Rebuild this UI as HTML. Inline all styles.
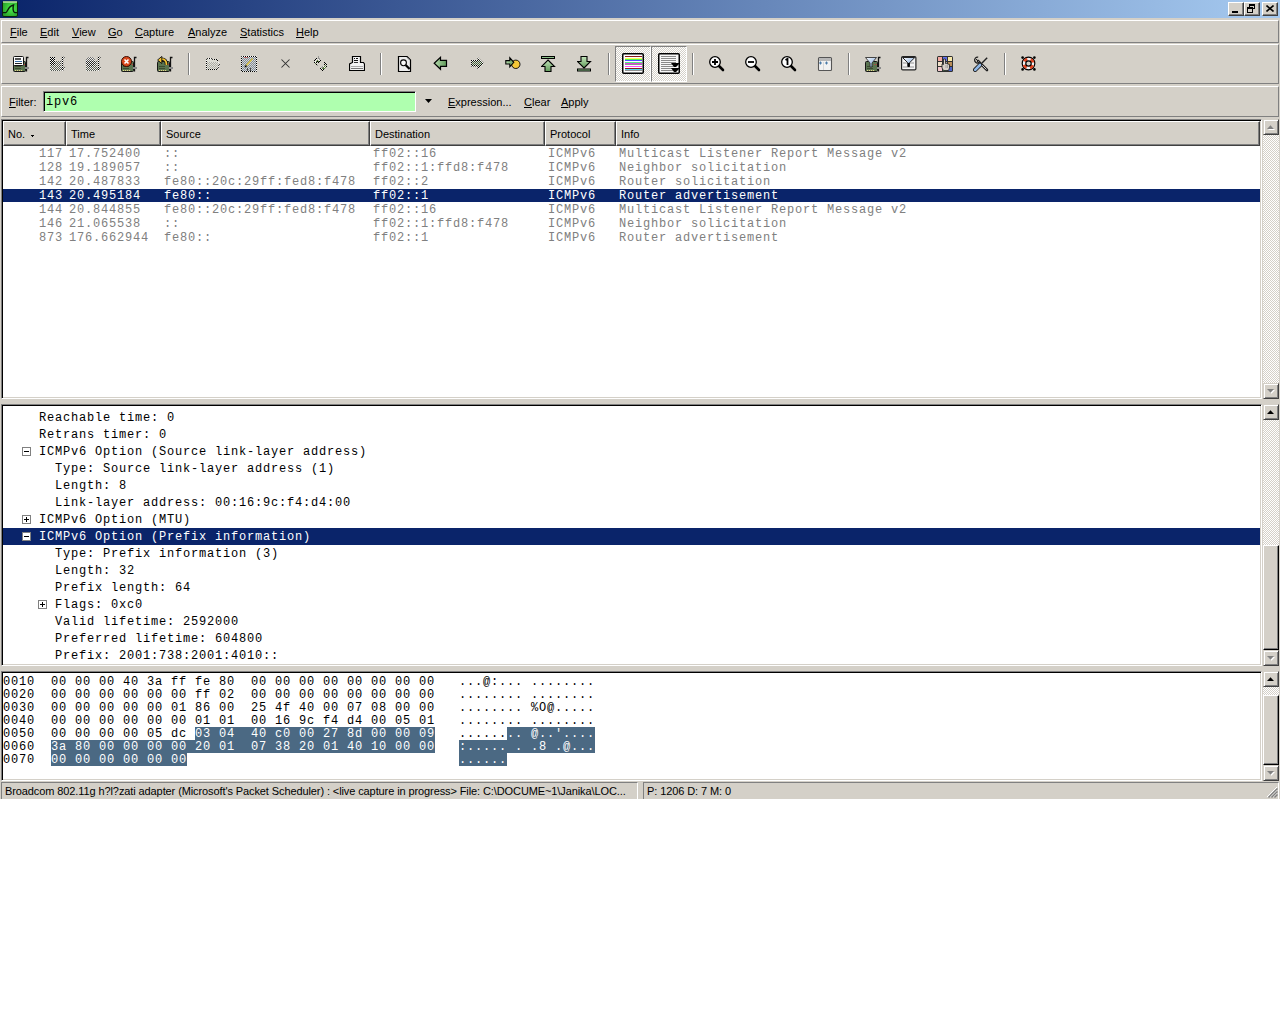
<!DOCTYPE html><html><head><meta charset="utf-8"><style>
*{margin:0;padding:0;box-sizing:border-box}
html,body{width:1280px;height:1024px;overflow:hidden;background:#fff}
body{position:relative;font-family:"Liberation Sans",sans-serif;font-size:11px;color:#000}
.ab{position:absolute}
.win{position:absolute;left:0;top:18px;width:1280px;height:781px;background:#d4d0c8}
.title{position:absolute;left:0;top:0;width:1280px;height:18px;background:linear-gradient(to right,#0a246a,#a6caf0)}
.raised{position:absolute;border-top:1px solid #fff;border-left:1px solid #fff;border-right:1px solid #808080;border-bottom:1px solid #808080;background:#d4d0c8}
.sunk{position:absolute;border-top:1px solid #808080;border-left:1px solid #808080;border-right:1px solid #fff;border-bottom:1px solid #fff;background:#fff;box-shadow:inset 1px 1px 0 #000,inset -1px -1px 0 #d4d0c8;overflow:hidden}
.btn{position:absolute;background:#d4d0c8;border-top:1px solid #d4d0c8;border-left:1px solid #d4d0c8;border-right:1px solid #404040;border-bottom:1px solid #404040;box-shadow:inset 1px 1px 0 #fff,inset -1px -1px 0 #808080}
.cbtn{position:absolute;background:#d4d0c8;border-top:1px solid #fff;border-left:1px solid #fff;border-right:1px solid #404040;border-bottom:1px solid #404040;box-shadow:inset -1px -1px 0 #808080}
.chk{background:conic-gradient(#fff 25%,#d4d0c8 0 50%,#fff 0 75%,#d4d0c8 0) 0 0/2px 2px}
.mono{font-family:"Liberation Mono",monospace;font-size:12px;letter-spacing:0.8px;white-space:pre}
.t{position:absolute;white-space:pre}
u{text-decoration:underline;text-underline-offset:1px;text-decoration-thickness:1px}
.hdr{position:absolute;top:0;height:25px;background:#d4d0c8;border-top:1px solid #fff;border-left:1px solid #fff;border-right:1px solid #404040;border-bottom:1px solid #404040;box-shadow:inset -1px -1px 0 #808080;line-height:24px;padding-left:4px}
.sep{position:absolute;width:2px;border-left:1px solid #808080;border-right:1px solid #fff}
</style></head><body>
<div class="title"></div>
<svg class="ab" style="left:2px;top:1px" width="16" height="16" viewBox="0 0 16 16"><defs><radialGradient id="gi" cx="0.6" cy="0.45" r="0.65"><stop offset="0" stop-color="#4cf04c"/><stop offset="1" stop-color="#28a028"/></radialGradient></defs><rect x="0.5" y="0.5" width="15" height="15" rx="1.5" fill="url(#gi)" stroke="#0c240c" stroke-width="1"/><rect x="1" y="0" width="14" height="2" fill="#b0e0a0" opacity="0.8"/><path d="M0.5 11.6H3.8C5.5 11.6 6 5 11.5 4C10.8 6.5 10.8 11.2 12.8 11.6H15.5" fill="none" stroke="#0a200a" stroke-width="1.4"/></svg>
<div class="cbtn" style="left:1228px;top:2px;width:16px;height:14px"></div>
<div class="cbtn" style="left:1244px;top:2px;width:16px;height:14px"></div>
<div class="cbtn" style="left:1262px;top:2px;width:16px;height:14px"></div>
<div class="ab" style="left:1232px;top:11px;width:6px;height:2px;background:#000"></div>
<div class="ab" style="left:1249px;top:4px;width:6px;height:5px;border:1px solid #000;border-top-width:2px"></div>
<div class="ab" style="left:1247px;top:7px;width:6px;height:6px;border:1px solid #000;border-top-width:2px;background:#d4d0c8"></div>
<svg class="ab" style="left:1266px;top:5px" width="8" height="7" viewBox="0 0 8 7"><path d="M0.5 0.5L7.5 6.5M7.5 0.5L0.5 6.5" stroke="#000" stroke-width="1.6"/></svg>
<div class="win">
<div class="raised" style="left:1px;top:2px;width:1278px;height:23px"></div>
<div class="t" style="left:10px;top:8px;line-height:13px"><u>F</u>ile</div>
<div class="t" style="left:40px;top:8px;line-height:13px"><u>E</u>dit</div>
<div class="t" style="left:72px;top:8px;line-height:13px"><u>V</u>iew</div>
<div class="t" style="left:108px;top:8px;line-height:13px"><u>G</u>o</div>
<div class="t" style="left:135px;top:8px;line-height:13px"><u>C</u>apture</div>
<div class="t" style="left:188px;top:8px;line-height:13px"><u>A</u>nalyze</div>
<div class="t" style="left:240px;top:8px;line-height:13px"><u>S</u>tatistics</div>
<div class="t" style="left:296px;top:8px;line-height:13px"><u>H</u>elp</div>
<div class="raised" style="left:1px;top:26px;width:1278px;height:40px"></div>
<div class="raised" style="left:1px;top:68px;width:1278px;height:31px"></div>
<svg width="0" height="0" style="position:absolute"><defs><pattern id="dith" width="2" height="2" patternUnits="userSpaceOnUse"><rect width="1" height="1" fill="#000"/><rect x="1" y="1" width="1" height="1" fill="#000"/><rect x="1" y="0" width="1" height="1" fill="#fff"/><rect x="0" y="1" width="1" height="1" fill="#e8e8e0"/></pattern><linearGradient id="garr" x1="0" y1="0" x2="1" y2="0"><stop offset="0" stop-color="#b8dcb0"/><stop offset="1" stop-color="#5f9a58"/></linearGradient><linearGradient id="garrv" x1="0" y1="0" x2="0" y2="1"><stop offset="0" stop-color="#c4e4bc"/><stop offset="1" stop-color="#5f9a58"/></linearGradient><linearGradient id="funl" x1="0" y1="0" x2="1" y2="1"><stop offset="0" stop-color="#ffffff"/><stop offset="1" stop-color="#6a9ad8"/></linearGradient></defs></svg>
<svg class="ab" style="left:13px;top:38px" width="16" height="16" viewBox="0 0 16 16"><path d="M13.5 15.5V1.5H15.5" stroke="#111" stroke-width="1.3" fill="none"/><rect x="0.5" y="5.5" width="12" height="10" rx="1" fill="#5a7450" stroke="#161616"/><rect x="2" y="10" width="6" height="1" fill="#3c4a30"/><rect x="2" y="12" width="6" height="1" fill="#3c4a30"/><path d="M2 14.5H10" stroke="#e0d48a" stroke-width="1" stroke-dasharray="1.2 0.8"/><rect x="12" y="11" width="4" height="2" fill="#8c8c8c"/><rect x="9" y="8" width="1" height="1" fill="#c04040"/><rect x="11" y="8" width="1" height="1" fill="#c04040"/><rect x="0.5" y="0.5" width="10" height="9" rx="1" fill="#fff" stroke="#111"/><rect x="2" y="2" width="6" height="2" fill="#555"/><rect x="2" y="5" width="7" height="1" fill="#3a6ea5"/><rect x="2" y="7" width="7" height="1" fill="#222"/></svg>
<svg class="ab" style="left:49px;top:38px" width="16" height="16" viewBox="0 0 16 16"><path d="M1 5H12V15H1Z M12 11H16V13H12Z M1 1H6V6H1Z" fill="#d8dcd0"/><path d="M1 5H12V15H1Z M12 11H16V13H12Z" fill="url(#dith)" opacity="0.6"/><path d="M13.5 15V1.5H15.5" stroke="url(#dith)" stroke-width="1.5" fill="none"/><path d="M1 1H6V9H1Z" fill="url(#dith)"/></svg>
<svg class="ab" style="left:85px;top:38px" width="16" height="16" viewBox="0 0 16 16"><path d="M1 5H12V15H1Z M12 11H16V13H12Z" fill="#d8dcd0"/><circle cx="5.5" cy="6" r="5" fill="#e8e8e8"/><path d="M1 5H12V15H1Z M12 11H16V13H12Z" fill="url(#dith)" opacity="0.6"/><path d="M13.5 15V1.5H15.5" stroke="url(#dith)" stroke-width="1.5" fill="none"/><circle cx="5.5" cy="6" r="5" fill="url(#dith)" opacity="0.6"/></svg>
<svg class="ab" style="left:121px;top:38px" width="16" height="16" viewBox="0 0 16 16"><path d="M13.5 15.5V1.5H15.5" stroke="#111" stroke-width="1.3" fill="none"/><rect x="0.5" y="5.5" width="12" height="10" rx="1" fill="#5a7450" stroke="#161616"/><rect x="2" y="10" width="6" height="1" fill="#3c4a30"/><rect x="2" y="12" width="6" height="1" fill="#3c4a30"/><path d="M2 14.5H10" stroke="#e0d48a" stroke-width="1" stroke-dasharray="1.2 0.8"/><rect x="12" y="11" width="4" height="2" fill="#8c8c8c"/><rect x="9" y="8" width="1" height="1" fill="#c04040"/><rect x="11" y="8" width="1" height="1" fill="#c04040"/><circle cx="5.5" cy="5.5" r="5" fill="#d8481c" stroke="#3a0c00" stroke-width="1"/><path d="M3.5 3.5L7.5 7.5M7.5 3.5L3.5 7.5" stroke="#fff" stroke-width="1.6"/></svg>
<svg class="ab" style="left:157px;top:38px" width="16" height="16" viewBox="0 0 16 16"><path d="M13.5 15.5V1.5H15.5" stroke="#111" stroke-width="1.3" fill="none"/><rect x="0.5" y="5.5" width="12" height="10" rx="1" fill="#5a7450" stroke="#161616"/><rect x="2" y="10" width="6" height="1" fill="#3c4a30"/><rect x="2" y="12" width="6" height="1" fill="#3c4a30"/><path d="M2 14.5H10" stroke="#e0d48a" stroke-width="1" stroke-dasharray="1.2 0.8"/><rect x="12" y="11" width="4" height="2" fill="#8c8c8c"/><rect x="9" y="8" width="1" height="1" fill="#c04040"/><rect x="11" y="8" width="1" height="1" fill="#c04040"/><path d="M4.5 3.2C7.5 3 9.5 4.5 9.5 9" stroke="#111" stroke-width="3.4" fill="none"/><path d="M4.5 3.2C7.5 3 9.5 4.5 9.5 9" stroke="#f0c030" stroke-width="1.8" fill="none"/><path d="M0.6 4L4.8 0.4V7.6Z" fill="#f0c030" stroke="#111" stroke-width="0.9"/></svg>
<div class="ab" style="left:188px;top:35px;width:2px;height:22px;border-left:1px solid #808080;border-right:1px solid #fff"></div>
<svg class="ab" style="left:205px;top:38px" width="16" height="16" viewBox="0 0 16 16"><path d="M1.5 13.5V3.5L2.5 2.5H6.5L7.5 3.5H12.5V5.5L14.5 7.5L12.5 13.5Z" fill="#dcdcd4" stroke="url(#dith)" stroke-width="1"/><path d="M2 6H14L12 13H2Z" fill="url(#dith)" opacity="0.22"/></svg>
<svg class="ab" style="left:241px;top:38px" width="16" height="16" viewBox="0 0 16 16"><path d="M0.5 0.5H15.5V15.5H0.5Z" fill="#c0c8d0" stroke="url(#dith)" stroke-width="1"/><path d="M1 1H15V15H1Z" fill="url(#dith)" opacity="0.3"/><path d="M5 10L11.5 2.5" stroke="#d8c040" stroke-width="1.4"/><path d="M4 11L5.5 9.5" stroke="#000" stroke-width="1.5"/><rect x="3" y="1" width="4" height="1" fill="#c04040" opacity="0.6"/><rect x="6" y="12" width="1" height="3" fill="#444"/><rect x="9" y="12" width="1" height="3" fill="#444"/></svg>
<svg class="ab" style="left:277px;top:38px" width="16" height="16" viewBox="0 0 16 16"><path d="M4.5 3.5L12.5 11.5M12.5 3.5L4.5 11.5" stroke="#303030" stroke-width="1.05"/></svg>
<svg class="ab" style="left:313px;top:38px" width="16" height="16" viewBox="0 0 16 16"><rect x="5" y="0" width="1" height="1" fill="#9a9a98"/><rect x="5" y="1" width="1" height="1" fill="#9a9a98"/><rect x="5" y="2" width="1" height="1" fill="#9a9a98"/><rect x="6" y="2" width="1" height="1" fill="#9a9a98"/><rect x="6" y="3" width="1" height="1" fill="#9a9a98"/><rect x="4" y="9" width="1" height="1" fill="#9a9a98"/><rect x="9" y="10" width="1" height="1" fill="#9a9a98"/><rect x="9" y="11" width="1" height="1" fill="#9a9a98"/><rect x="8" y="11" width="1" height="1" fill="#9a9a98"/><rect x="3" y="3" width="1" height="1" fill="#f4f4f0"/><rect x="5" y="3" width="1" height="1" fill="#f4f4f0"/><rect x="2" y="5" width="1" height="1" fill="#f4f4f0"/><rect x="4" y="4" width="1" height="1" fill="#f4f4f0"/><rect x="6" y="4" width="1" height="1" fill="#f4f4f0"/><rect x="2" y="6" width="1" height="1" fill="#f4f4f0"/><rect x="12" y="8" width="1" height="1" fill="#f4f4f0"/><rect x="12" y="10" width="1" height="1" fill="#f4f4f0"/><rect x="11" y="11" width="1" height="1" fill="#f4f4f0"/><rect x="8" y="12" width="1" height="1" fill="#f4f4f0"/><rect x="9" y="13" width="1" height="1" fill="#f4f4f0"/><rect x="10" y="10" width="1" height="1" fill="#f4f4f0"/><rect x="4" y="4" width="1" height="1" fill="#5a7a40"/><rect x="3" y="5" width="1" height="1" fill="#5a7a40"/><rect x="5" y="5" width="1" height="1" fill="#5a7a40"/><rect x="2" y="7" width="1" height="1" fill="#5a7a40"/><rect x="12" y="9" width="1" height="1" fill="#5a7a40"/><rect x="11" y="10" width="1" height="1" fill="#5a7a40"/><rect x="10" y="11" width="1" height="1" fill="#5a7a40"/><rect x="9" y="12" width="1" height="1" fill="#5a7a40"/><rect x="10" y="12" width="1" height="1" fill="#5a7a40"/><rect x="11" y="12" width="1" height="1" fill="#5a7a40"/><rect x="12" y="11" width="1" height="1" fill="#5a7a40"/><rect x="3" y="2" width="1" height="1" fill="#000"/><rect x="2" y="3" width="1" height="1" fill="#000"/><rect x="1" y="4" width="1" height="1" fill="#000"/><rect x="7" y="4" width="1" height="1" fill="#000"/><rect x="4" y="5" width="1" height="1" fill="#000"/><rect x="6" y="5" width="1" height="1" fill="#000"/><rect x="1" y="6" width="1" height="1" fill="#000"/><rect x="3" y="6" width="1" height="1" fill="#000"/><rect x="5" y="6" width="1" height="1" fill="#000"/><rect x="3" y="8" width="1" height="1" fill="#000"/><rect x="11" y="6" width="1" height="1" fill="#000"/><rect x="12" y="7" width="1" height="1" fill="#000"/><rect x="11" y="8" width="1" height="1" fill="#000"/><rect x="13" y="8" width="1" height="1" fill="#000"/><rect x="13" y="10" width="1" height="1" fill="#000"/><rect x="7" y="12" width="1" height="1" fill="#000"/><rect x="8" y="13" width="1" height="1" fill="#000"/><rect x="10" y="13" width="1" height="1" fill="#000"/><rect x="9" y="14" width="1" height="1" fill="#000"/></svg>
<svg class="ab" style="left:349px;top:38px" width="16" height="16" viewBox="0 0 16 16"><path d="M3.5 0.5H11.5V6.5H14.5L15.5 8V14.5H0.5V8L3.5 6.5Z" fill="#f4f4f4" stroke="#000" stroke-width="1.2"/><rect x="5" y="2" width="1" height="1" fill="#111"/><rect x="7" y="2" width="2" height="1" fill="#111"/><rect x="5" y="4" width="4" height="1" fill="#111"/><rect x="5" y="6" width="4" height="1" fill="#333"/><rect x="2" y="10" width="12" height="1" fill="#aaa"/><rect x="2" y="12" width="12" height="1" fill="#777"/></svg>
<div class="ab" style="left:380px;top:35px;width:2px;height:22px;border-left:1px solid #808080;border-right:1px solid #fff"></div>
<svg class="ab" style="left:397px;top:38px" width="16" height="16" viewBox="0 0 16 16"><path d="M1.5 0.5H10L13.5 4V15.5H1.5Z" fill="#ececec" stroke="#000" stroke-width="1.2"/><path d="M10 1.5L12.5 4" stroke="#aaa" stroke-width="1"/><circle cx="6.5" cy="6.8" r="2.9" fill="#fafafa" stroke="#000" stroke-width="1.1"/><path d="M8.6 9L12.6 13" stroke="#000" stroke-width="2.3"/></svg>
<svg class="ab" style="left:433px;top:38px" width="16" height="16" viewBox="0 0 16 16"><path d="M1.2 7.2L7.5 1.3V4.3H13.5V10.3H7.5V13.3Z" fill="url(#garr)" stroke="#000" stroke-width="1.2"/></svg>
<svg class="ab" style="left:469px;top:38px" width="16" height="16" viewBox="0 0 16 16"><path d="M15 7.2L8.5 1V4H2V10.5H8.5V13.5Z" fill="url(#dith)"/><path d="M13.5 7.2L9.5 3.5V5.5H3V9H9.5V11Z" fill="#a0c090" opacity="0.45"/></svg>
<svg class="ab" style="left:505px;top:38px" width="16" height="16" viewBox="0 0 16 16"><circle cx="10.8" cy="8.3" r="4.2" fill="#f4c838" stroke="#000" stroke-width="0.9"/><path d="M0.8 4.6H4.8V1.8L8.8 6.3L4.8 10.8V8H0.8Z" fill="url(#garr)" stroke="#000" stroke-width="1.1"/></svg>
<svg class="ab" style="left:541px;top:38px" width="16" height="16" viewBox="0 0 16 16"><rect x="0.5" y="0.5" width="13" height="2" fill="#8cc088" stroke="#000"/><path d="M7 4L13.5 10.5H10V15.5H4V10.5H0.5Z" fill="url(#garrv)" stroke="#000" stroke-width="1.1"/></svg>
<svg class="ab" style="left:577px;top:38px" width="16" height="16" viewBox="0 0 16 16"><rect x="0.5" y="13" width="13" height="2" fill="#8cc088" stroke="#000"/><path d="M7 12L13.5 5.5H10V0.5H4V5.5H0.5Z" fill="url(#garrv)" stroke="#000" stroke-width="1.1"/></svg>
<div class="ab" style="left:608px;top:35px;width:2px;height:22px;border-left:1px solid #808080;border-right:1px solid #fff"></div>
<div class="ab chk" style="left:615px;top:28px;width:36px;height:36px;border-top:1px solid #808080;border-left:1px solid #808080;border-right:1px solid #fff;border-bottom:1px solid #fff"></div>
<div class="ab chk" style="left:651px;top:28px;width:36px;height:36px;border-top:1px solid #808080;border-left:1px solid #808080;border-right:1px solid #fff;border-bottom:1px solid #fff"></div>
<svg class="ab" style="left:622px;top:35px" width="22" height="21" viewBox="0 0 22 21"><rect x="0.75" y="0.75" width="20.5" height="19.5" rx="1" fill="#fff" stroke="#000" stroke-width="1.5"/><rect x="3" y="3" width="17" height="1" fill="#8b1a1a"/><rect x="3" y="5" width="17" height="1" fill="#ffff50"/><rect x="3" y="6" width="17" height="1" fill="#50f050"/><rect x="3" y="7" width="17" height="1" fill="#5050ff"/><rect x="3" y="9" width="17" height="1" fill="#50f080"/><rect x="3" y="10" width="17" height="1" fill="#e040e0"/><rect x="3" y="11" width="17" height="1" fill="#909090"/><rect x="3" y="13" width="17" height="1" fill="#ff50ff"/><rect x="3" y="15" width="17" height="1" fill="#8b1a1a"/><rect x="3" y="16" width="17" height="1" fill="#50d8f0"/><rect x="3" y="17" width="17" height="1" fill="#909090"/></svg>
<svg class="ab" style="left:658px;top:35px" width="22" height="21" viewBox="0 0 22 21"><rect x="0.75" y="0.75" width="20.5" height="19.5" rx="1" fill="#f8f8f8" stroke="#000" stroke-width="1.5"/><rect x="3" y="3" width="15" height="1" fill="#8a8a8a"/><rect x="3" y="5" width="15" height="1" fill="#8a8a8a"/><rect x="3" y="7" width="15" height="1" fill="#8a8a8a"/><rect x="3" y="9" width="15" height="1" fill="#8a8a8a"/><rect x="3" y="11" width="15" height="1" fill="#8a8a8a"/><rect x="3" y="13" width="15" height="1" fill="#8a8a8a"/><rect x="3" y="15" width="15" height="1" fill="#8a8a8a"/><rect x="3" y="17" width="15" height="1" fill="#8a8a8a"/><path d="M13 10H21V11L18 14H16Z M13 15H21V16L18 19H16Z" fill="#000"/></svg>
<div class="ab" style="left:692px;top:35px;width:2px;height:22px;border-left:1px solid #808080;border-right:1px solid #fff"></div>
<svg class="ab" style="left:709px;top:38px" width="16" height="16" viewBox="0 0 16 16"><path d="M9.5 9.5L14 14" stroke="#000" stroke-width="2.6" stroke-linecap="round"/><circle cx="6" cy="6" r="5.3" fill="#fff" stroke="#000" stroke-width="1.3"/><path d="M6 3V9M3 6H9" stroke="#000" stroke-width="1.8"/></svg>
<svg class="ab" style="left:745px;top:38px" width="16" height="16" viewBox="0 0 16 16"><path d="M9.5 9.5L14 14" stroke="#000" stroke-width="2.6" stroke-linecap="round"/><circle cx="6" cy="6" r="5.3" fill="#fff" stroke="#000" stroke-width="1.3"/><path d="M3 6H9" stroke="#000" stroke-width="1.8"/></svg>
<svg class="ab" style="left:781px;top:38px" width="16" height="16" viewBox="0 0 16 16"><path d="M9.5 9.5L14 14" stroke="#000" stroke-width="2.6" stroke-linecap="round"/><circle cx="6" cy="6" r="5.3" fill="#fff" stroke="#000" stroke-width="1.3"/><path d="M4.5 4L6.5 2.8V9" stroke="#000" stroke-width="1.8" fill="none"/></svg>
<svg class="ab" style="left:817px;top:38px" width="16" height="16" viewBox="0 0 16 16"><rect x="1.5" y="1.5" width="13" height="13" rx="1" fill="#f2f2f2" stroke="#555" stroke-width="1.1"/><rect x="2" y="2" width="12" height="3" fill="#b8b8b8"/><path d="M2 7H5M3.5 5.5V8.5M8 7H11M9.5 5.5V8.5" stroke="#4a7aa8" stroke-width="1"/><rect x="6" y="6" width="1" height="8" fill="#d8d8d8"/></svg>
<div class="ab" style="left:848px;top:35px;width:2px;height:22px;border-left:1px solid #808080;border-right:1px solid #fff"></div>
<svg class="ab" style="left:865px;top:38px" width="16" height="16" viewBox="0 0 16 16"><path d="M13.5 15.5V1.5H15.5" stroke="#111" stroke-width="1.3" fill="none"/><rect x="0.5" y="5.5" width="12" height="10" rx="1" fill="#5a7450" stroke="#161616"/><rect x="2" y="10" width="6" height="1" fill="#3c4a30"/><rect x="2" y="12" width="6" height="1" fill="#3c4a30"/><path d="M2 14.5H10" stroke="#e0d48a" stroke-width="1" stroke-dasharray="1.2 0.8"/><rect x="12" y="11" width="4" height="2" fill="#8c8c8c"/><rect x="9" y="8" width="1" height="1" fill="#c04040"/><rect x="11" y="8" width="1" height="1" fill="#c04040"/><path d="M0.5 1.5H11.5L7 7V11H5V7Z" fill="url(#funl)" stroke="#333" stroke-width="0.9"/></svg>
<svg class="ab" style="left:901px;top:38px" width="16" height="16" viewBox="0 0 16 16"><rect x="0.6" y="0.6" width="14.3" height="13.3" rx="1.2" fill="#f4f4f4" stroke="#222" stroke-width="1.2"/><rect x="2" y="6" width="11" height="2" fill="#c4c4c4"/><rect x="2" y="10" width="11" height="2" fill="#c4c4c4"/><path d="M1.5 1.5H13.8L8.5 6.8V10.5H6.8V6.8Z" fill="url(#funl)" stroke="#222" stroke-width="1"/><rect x="6.8" y="7" width="1.7" height="3.8" fill="#000"/></svg>
<svg class="ab" style="left:937px;top:38px" width="16" height="16" viewBox="0 0 16 16"><rect x="0" y="0" width="16" height="16" rx="1.5" fill="#303030"/><rect x="1" y="1" width="4" height="4" fill="#f4a8a0"/><rect x="6" y="1" width="4" height="4" fill="#6070e8"/><rect x="11" y="1" width="4" height="4" fill="#f8e8a8"/><rect x="1" y="6" width="4" height="4" fill="#f0e0c8"/><rect x="6" y="6" width="4" height="4" fill="#a8a8a8"/><rect x="11" y="6" width="4" height="4" fill="#b88c58"/><rect x="1" y="11" width="4" height="4" fill="#f4c8cc"/><rect x="6" y="11" width="4" height="4" fill="#58c060"/><rect x="11" y="11" width="4" height="4" fill="#4c64c8"/><path d="M6.5 3V8.5L5 8V12L6.5 14.5H11.5L12.5 12V8.5L9.5 7.5H8.5V3Z" fill="#d8d0c8" stroke="#202020" stroke-width="0.8"/><path d="M9 9V12M10.5 9V12" stroke="#888" stroke-width="0.6"/></svg>
<svg class="ab" style="left:973px;top:38px" width="16" height="16" viewBox="0 0 16 16"><path d="M5 5L14 14" stroke="#202020" stroke-width="2.6" stroke-linecap="round"/><path d="M5.5 5.5L13.5 13.5" stroke="#e8e8e8" stroke-width="0.9"/><path d="M5.2 1.2A3 3 0 1 0 6.8 6.2" stroke="#202020" stroke-width="1.3" fill="none"/><path d="M3 3L4.5 4.5" stroke="#202020" stroke-width="1"/><path d="M9 7L14.2 1.8" stroke="#202020" stroke-width="1.4"/><path d="M2.2 13.8L7 9" stroke="#202020" stroke-width="4.4" stroke-linecap="round"/><path d="M2.2 13.8L7 9" stroke="#90b8e8" stroke-width="2.6" stroke-linecap="round"/></svg>
<div class="ab" style="left:1004px;top:35px;width:2px;height:22px;border-left:1px solid #808080;border-right:1px solid #fff"></div>
<svg class="ab" style="left:1021px;top:38px" width="16" height="16" viewBox="0 0 16 16"><circle cx="7.5" cy="7.5" r="6.3" fill="#f0f0f0" stroke="#000" stroke-width="1.2"/><circle cx="7.5" cy="7.5" r="4.4" fill="none" stroke="#e24420" stroke-width="3.2" stroke-dasharray="3.45 3.46" stroke-dashoffset="5.2"/><circle cx="7.5" cy="7.5" r="2.7" fill="#d4d0c8" stroke="#000" stroke-width="1.2"/><circle cx="1.6" cy="1.6" r="1.3" fill="#000"/><circle cx="13.4" cy="1.6" r="1.3" fill="#000"/><circle cx="1.6" cy="13.4" r="1.3" fill="#000"/><circle cx="13.4" cy="13.4" r="1.3" fill="#000"/></svg>
<div class="t" style="left:9px;top:78px;line-height:13px"><u>F</u>ilter:</div>
<div class="ab" style="left:43px;top:73px;width:373px;height:21px;background:#afffaf;border-top:1px solid #808080;border-left:1px solid #808080;border-right:1px solid #fff;border-bottom:1px solid #fff;box-shadow:inset 1px 1px 0 #000"></div>
<div class="t mono" style="left:46px;top:76px;line-height:17px">ipv6</div>
<svg class="ab" style="left:425px;top:81px" width="7" height="4" viewBox="0 0 7 4"><path d="M0 0H7L3.5 4Z" fill="#000"/></svg>
<div class="t" style="left:448px;top:78px;line-height:13px"><u>E</u>xpression...</div>
<div class="t" style="left:524px;top:78px;line-height:13px"><u>C</u>lear</div>
<div class="t" style="left:561px;top:78px;line-height:13px"><u>A</u>pply</div>
<div class="sunk" style="left:1px;top:101px;width:1261px;height:280px">
<div class="hdr" style="left:1px;top:1px;width:63px">No.</div>
<div class="hdr" style="left:64px;top:1px;width:95px">Time</div>
<div class="hdr" style="left:159px;top:1px;width:209px">Source</div>
<div class="hdr" style="left:368px;top:1px;width:175px">Destination</div>
<div class="hdr" style="left:543px;top:1px;width:71px">Protocol</div>
<div class="hdr" style="left:614px;top:1px;width:644px">Info</div>
<div class="ab" style="left:29px;top:15px;width:3px;height:1px;background:#000"></div><div class="ab" style="left:30px;top:16px;width:1px;height:1px;background:#000"></div>
<div class="ab mono" style="left:1px;top:27px;width:1257px;height:13px;line-height:14px;color:#808080;">
<span class="ab" style="left:36px;top:0">117</span>
<span class="ab" style="left:66px;top:0">17.752400</span>
<span class="ab" style="left:161px;top:0">::</span>
<span class="ab" style="left:370px;top:0">ff02::16</span>
<span class="ab" style="left:545px;top:0">ICMPv6</span>
<span class="ab" style="left:616px;top:0">Multicast Listener Report Message v2</span>
</div>
<div class="ab mono" style="left:1px;top:41px;width:1257px;height:13px;line-height:14px;color:#808080;">
<span class="ab" style="left:36px;top:0">128</span>
<span class="ab" style="left:66px;top:0">19.189057</span>
<span class="ab" style="left:161px;top:0">::</span>
<span class="ab" style="left:370px;top:0">ff02::1:ffd8:f478</span>
<span class="ab" style="left:545px;top:0">ICMPv6</span>
<span class="ab" style="left:616px;top:0">Neighbor solicitation</span>
</div>
<div class="ab mono" style="left:1px;top:55px;width:1257px;height:13px;line-height:14px;color:#808080;">
<span class="ab" style="left:36px;top:0">142</span>
<span class="ab" style="left:66px;top:0">20.487833</span>
<span class="ab" style="left:161px;top:0">fe80::20c:29ff:fed8:f478</span>
<span class="ab" style="left:370px;top:0">ff02::2</span>
<span class="ab" style="left:545px;top:0">ICMPv6</span>
<span class="ab" style="left:616px;top:0">Router solicitation</span>
</div>
<div class="ab mono" style="left:1px;top:69px;width:1257px;height:13px;line-height:14px;color:#fff;background:#0a246a;">
<span class="ab" style="left:36px;top:0">143</span>
<span class="ab" style="left:66px;top:0">20.495184</span>
<span class="ab" style="left:161px;top:0">fe80::</span>
<span class="ab" style="left:370px;top:0">ff02::1</span>
<span class="ab" style="left:545px;top:0">ICMPv6</span>
<span class="ab" style="left:616px;top:0">Router advertisement</span>
</div>
<div class="ab mono" style="left:1px;top:83px;width:1257px;height:13px;line-height:14px;color:#808080;">
<span class="ab" style="left:36px;top:0">144</span>
<span class="ab" style="left:66px;top:0">20.844855</span>
<span class="ab" style="left:161px;top:0">fe80::20c:29ff:fed8:f478</span>
<span class="ab" style="left:370px;top:0">ff02::16</span>
<span class="ab" style="left:545px;top:0">ICMPv6</span>
<span class="ab" style="left:616px;top:0">Multicast Listener Report Message v2</span>
</div>
<div class="ab mono" style="left:1px;top:97px;width:1257px;height:13px;line-height:14px;color:#808080;">
<span class="ab" style="left:36px;top:0">146</span>
<span class="ab" style="left:66px;top:0">21.065538</span>
<span class="ab" style="left:161px;top:0">::</span>
<span class="ab" style="left:370px;top:0">ff02::1:ffd8:f478</span>
<span class="ab" style="left:545px;top:0">ICMPv6</span>
<span class="ab" style="left:616px;top:0">Neighbor solicitation</span>
</div>
<div class="ab mono" style="left:1px;top:111px;width:1257px;height:13px;line-height:14px;color:#808080;">
<span class="ab" style="left:36px;top:0">873</span>
<span class="ab" style="left:66px;top:0">176.662944</span>
<span class="ab" style="left:161px;top:0">fe80::</span>
<span class="ab" style="left:370px;top:0">ff02::1</span>
<span class="ab" style="left:545px;top:0">ICMPv6</span>
<span class="ab" style="left:616px;top:0">Router advertisement</span>
</div>
</div>
<div class="ab chk" style="left:1263px;top:101px;width:16px;height:280px"></div>
<div class="btn" style="left:1263px;top:101px;width:16px;height:16px"></div>
<svg class="ab" style="left:1267px;top:107px" width="8" height="6" viewBox="0 0 8 6"><path d="M1 5H8L4.5 1.2Z" fill="#fff"/><path d="M0 4H7L3.5 0.2Z" fill="#808080"/></svg>
<div class="btn" style="left:1263px;top:365px;width:16px;height:16px"></div>
<svg class="ab" style="left:1267px;top:371px" width="8" height="5" viewBox="0 0 8 5"><path d="M1 1H8L4.5 4.8Z" fill="#fff"/><path d="M0 0H7L3.5 3.8Z" fill="#808080"/></svg>
<div class="sunk" style="left:1px;top:386px;width:1261px;height:262px">
<div class="ab mono" style="left:1px;top:4px;width:1257px;height:17px;line-height:17px;color:#000;">
<span class="ab" style="left:36px;top:1px">Reachable time: 0</span>
</div>
<div class="ab mono" style="left:1px;top:21px;width:1257px;height:17px;line-height:17px;color:#000;">
<span class="ab" style="left:36px;top:1px">Retrans timer: 0</span>
</div>
<div class="ab mono" style="left:1px;top:38px;width:1257px;height:17px;line-height:17px;color:#000;">
<div class="ab" style="left:19px;top:4px;width:9px;height:9px;border:1px solid #808080;background:#fff"></div>
<div class="ab" style="left:21px;top:8px;width:5px;height:1px;background:#000"></div>
<span class="ab" style="left:36px;top:1px">ICMPv6 Option (Source link-layer address)</span>
</div>
<div class="ab mono" style="left:1px;top:55px;width:1257px;height:17px;line-height:17px;color:#000;">
<span class="ab" style="left:52px;top:1px">Type: Source link-layer address (1)</span>
</div>
<div class="ab mono" style="left:1px;top:72px;width:1257px;height:17px;line-height:17px;color:#000;">
<span class="ab" style="left:52px;top:1px">Length: 8</span>
</div>
<div class="ab mono" style="left:1px;top:89px;width:1257px;height:17px;line-height:17px;color:#000;">
<span class="ab" style="left:52px;top:1px">Link-layer address: 00:16:9c:f4:d4:00</span>
</div>
<div class="ab mono" style="left:1px;top:106px;width:1257px;height:17px;line-height:17px;color:#000;">
<div class="ab" style="left:19px;top:4px;width:9px;height:9px;border:1px solid #808080;background:#fff"></div>
<div class="ab" style="left:21px;top:8px;width:5px;height:1px;background:#000"></div>
<div class="ab" style="left:23px;top:6px;width:1px;height:5px;background:#000"></div>
<span class="ab" style="left:36px;top:1px">ICMPv6 Option (MTU)</span>
</div>
<div class="ab mono" style="left:1px;top:123px;width:1257px;height:17px;line-height:17px;color:#fff;background:#0a246a;">
<div class="ab" style="left:19px;top:4px;width:9px;height:9px;border:1px solid #808080;background:#fff"></div>
<div class="ab" style="left:21px;top:8px;width:5px;height:1px;background:#000"></div>
<span class="ab" style="left:36px;top:1px">ICMPv6 Option (Prefix information)</span>
</div>
<div class="ab mono" style="left:1px;top:140px;width:1257px;height:17px;line-height:17px;color:#000;">
<span class="ab" style="left:52px;top:1px">Type: Prefix information (3)</span>
</div>
<div class="ab mono" style="left:1px;top:157px;width:1257px;height:17px;line-height:17px;color:#000;">
<span class="ab" style="left:52px;top:1px">Length: 32</span>
</div>
<div class="ab mono" style="left:1px;top:174px;width:1257px;height:17px;line-height:17px;color:#000;">
<span class="ab" style="left:52px;top:1px">Prefix length: 64</span>
</div>
<div class="ab mono" style="left:1px;top:191px;width:1257px;height:17px;line-height:17px;color:#000;">
<div class="ab" style="left:35px;top:4px;width:9px;height:9px;border:1px solid #808080;background:#fff"></div>
<div class="ab" style="left:37px;top:8px;width:5px;height:1px;background:#000"></div>
<div class="ab" style="left:39px;top:6px;width:1px;height:5px;background:#000"></div>
<span class="ab" style="left:52px;top:1px">Flags: 0xc0</span>
</div>
<div class="ab mono" style="left:1px;top:208px;width:1257px;height:17px;line-height:17px;color:#000;">
<span class="ab" style="left:52px;top:1px">Valid lifetime: 2592000</span>
</div>
<div class="ab mono" style="left:1px;top:225px;width:1257px;height:17px;line-height:17px;color:#000;">
<span class="ab" style="left:52px;top:1px">Preferred lifetime: 604800</span>
</div>
<div class="ab mono" style="left:1px;top:242px;width:1257px;height:17px;line-height:17px;color:#000;">
<span class="ab" style="left:52px;top:1px">Prefix: 2001:738:2001:4010::</span>
</div>
</div>
<div class="ab chk" style="left:1263px;top:386px;width:16px;height:262px"></div>
<div class="btn" style="left:1263px;top:386px;width:16px;height:16px"></div>
<svg class="ab" style="left:1267px;top:392px" width="7" height="4" viewBox="0 0 7 4"><path d="M0 4H7L3.5 0.2Z" fill="#000"/></svg>
<div class="btn" style="left:1263px;top:632px;width:16px;height:16px"></div>
<svg class="ab" style="left:1267px;top:638px" width="8" height="5" viewBox="0 0 8 5"><path d="M1 1H8L4.5 4.8Z" fill="#fff"/><path d="M0 0H7L3.5 3.8Z" fill="#808080"/></svg>
<div class="ab" style="left:1263px;top:527px;width:16px;height:105px;background:#d4d0c8;border-top:1px solid #fff;border-left:1px solid #fff;border-right:1px solid #000;border-bottom:1px solid #000;box-shadow:inset -1px -1px 0 #808080"></div>
<div class="sunk" style="left:1px;top:653px;width:1261px;height:110px">
<div class="ab mono" style="left:1px;top:4px;height:13px;line-height:13px"><span style="color:#000">0010  00 00 00 40 3a ff fe 80  00 00 00 00 00 00 00 00   ...@:... ........</span></div>
<div class="ab mono" style="left:1px;top:17px;height:13px;line-height:13px"><span style="color:#000">0020  00 00 00 00 00 00 ff 02  00 00 00 00 00 00 00 00   ........ ........</span></div>
<div class="ab mono" style="left:1px;top:30px;height:13px;line-height:13px"><span style="color:#000">0030  00 00 00 00 00 01 86 00  25 4f 40 00 07 08 00 00   ........ %O@.....</span></div>
<div class="ab mono" style="left:1px;top:43px;height:13px;line-height:13px"><span style="color:#000">0040  00 00 00 00 00 00 01 01  00 16 9c f4 d4 00 05 01   ........ ........</span></div>
<div class="ab" style="left:193px;top:55px;width:240px;height:13px;background:#4b6983"></div>
<div class="ab" style="left:505px;top:55px;width:88px;height:13px;background:#4b6983"></div>
<div class="ab mono" style="left:1px;top:56px;height:13px;line-height:13px"><span style="color:#000">0050  00 00 00 00 05 dc </span><span style="color:#fff">03 04  40 c0 00 27 8d 00 00 09</span><span style="color:#000">   ......</span><span style="color:#fff">.. @..&#x27;....</span></div>
<div class="ab" style="left:49px;top:68px;width:384px;height:13px;background:#4b6983"></div>
<div class="ab" style="left:457px;top:68px;width:136px;height:13px;background:#4b6983"></div>
<div class="ab mono" style="left:1px;top:69px;height:13px;line-height:13px"><span style="color:#000">0060  </span><span style="color:#fff">3a 80 00 00 00 00 20 01  07 38 20 01 40 10 00 00</span><span style="color:#000">   </span><span style="color:#fff">:..... . .8 .@...</span></div>
<div class="ab" style="left:49px;top:81px;width:136px;height:13px;background:#4b6983"></div>
<div class="ab" style="left:457px;top:81px;width:48px;height:13px;background:#4b6983"></div>
<div class="ab mono" style="left:1px;top:82px;height:13px;line-height:13px"><span style="color:#000">0070  </span><span style="color:#fff">00 00 00 00 00 00</span><span style="color:#000">                                  </span><span style="color:#fff">......</span></div>
</div>
<div class="ab chk" style="left:1263px;top:653px;width:16px;height:110px"></div>
<div class="btn" style="left:1263px;top:653px;width:16px;height:16px"></div>
<svg class="ab" style="left:1267px;top:659px" width="7" height="4" viewBox="0 0 7 4"><path d="M0 4H7L3.5 0.2Z" fill="#000"/></svg>
<div class="btn" style="left:1263px;top:747px;width:16px;height:16px"></div>
<svg class="ab" style="left:1267px;top:753px" width="8" height="5" viewBox="0 0 8 5"><path d="M1 1H8L4.5 4.8Z" fill="#fff"/><path d="M0 0H7L3.5 3.8Z" fill="#808080"/></svg>
<div class="ab" style="left:1263px;top:677px;width:16px;height:70px;background:#d4d0c8;border-top:1px solid #fff;border-left:1px solid #fff;border-right:1px solid #000;border-bottom:1px solid #000;box-shadow:inset -1px -1px 0 #808080"></div>
<div class="ab" style="left:1px;top:764px;width:637px;height:17px;border-top:1px solid #808080;border-left:1px solid #808080;border-right:1px solid #fff"></div>
<div class="t" style="left:5px;top:767px;line-height:13px;letter-spacing:-0.1px">Broadcom 802.11g h?l?zati adapter (Microsoft's Packet Scheduler) : &lt;live capture in progress&gt; File: C:\DOCUME~1\Janika\LOC...</div>
<div class="ab" style="left:643px;top:764px;width:636px;height:17px;border-top:1px solid #808080;border-left:1px solid #808080;border-right:1px solid #fff"></div>
<div class="t" style="left:647px;top:767px;line-height:13px;letter-spacing:-0.1px">P: 1206 D: 7 M: 0</div>
<svg class="ab" style="left:1266px;top:768px" width="12" height="12" viewBox="0 0 12 12"><path d="M11 1L1 11M11 4L4 11M11 7L7 11" stroke="#fff" stroke-width="1"/><path d="M11.5 2.5L2.5 11.5M11.5 5.5L5.5 11.5M11.5 8.5L8.5 11.5" stroke="#808080" stroke-width="1.4"/></svg>
</div>
</body></html>
